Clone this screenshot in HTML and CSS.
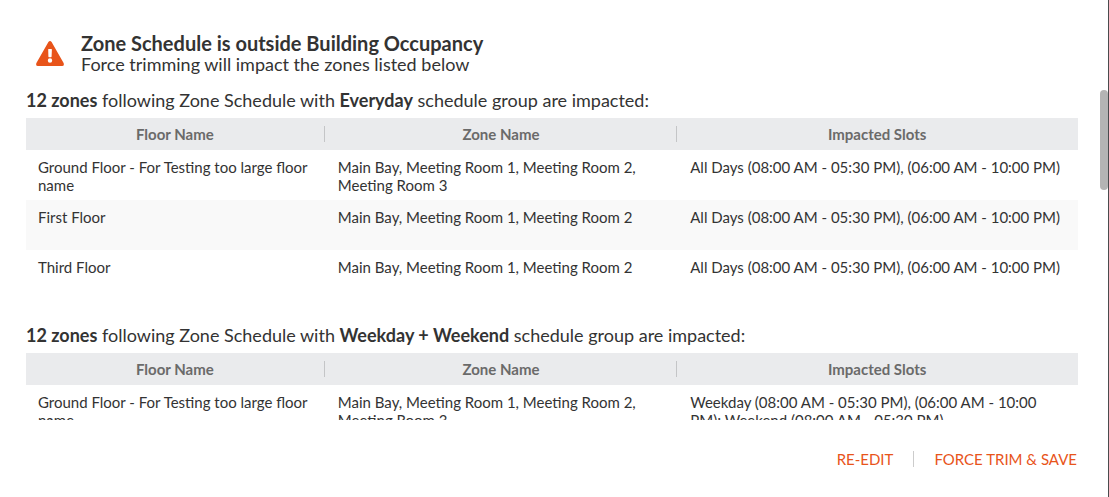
FILE: index.html
```
<!DOCTYPE html>
<html lang="en">
<head>
<meta charset="utf-8">
<meta name="viewport" content="width=device-width, initial-scale=1">
<title>Zone Schedule</title>
<link rel="stylesheet" href="styles.css">
</head>
<body>
<main class="dialog">
  <div class="content">
    <header class="alert">
      <svg class="alert-icon" viewBox="0 0 28 25" aria-hidden="true">
        <path class="icon-body" fill-rule="evenodd" d="M12.4 1Q14 -1 15.6 1L27.6 22Q28.6 25 26 25H2Q-.6 25 .4 22ZM12.2 8.5Q12 7.900 12.700 7.900H15.300Q16 7.900 15.900 8.600L15.600 15.600Q15.600 16.200 15 16.200H13Q12.400 16.200 12.400 15.600ZM14 17.300A2.200 2.200 0 1 0 14 21.700A2.200 2.200 0 1 0 14 17.300Z"/>
      </svg>
      <div>
        <h1 class="title">Zone Schedule is outside Building Occupancy</h1>
        <p class="subtitle">Force trimming will impact the zones listed below</p>
      </div>
    </header>

    <section class="group">
      <h2 class="group-title"><b>12 zones</b> following Zone Schedule with <b>Everyday</b> schedule group are impacted:</h2>
      <table class="zones">
        <thead>
          <tr><th class="floor">Floor Name</th><th class="zone">Zone Name</th><th class="slots">Impacted Slots</th></tr>
        </thead>
        <tbody>
          <tr><td>Ground Floor - For Testing too large floor name</td><td>Main Bay, Meeting Room 1, Meeting Room 2, Meeting Room 3</td><td>All Days (08:00 AM - 05:30 PM), (06:00 AM - 10:00 PM)</td></tr>
          <tr><td>First Floor</td><td>Main Bay, Meeting Room 1, Meeting Room 2</td><td>All Days (08:00 AM - 05:30 PM), (06:00 AM - 10:00 PM)</td></tr>
          <tr><td>Third Floor</td><td>Main Bay, Meeting Room 1, Meeting Room 2</td><td>All Days (08:00 AM - 05:30 PM), (06:00 AM - 10:00 PM)</td></tr>
        </tbody>
      </table>
    </section>

    <section class="group">
      <h2 class="group-title"><b>12 zones</b> following Zone Schedule with <b>Weekday + Weekend</b> schedule group are impacted:</h2>
      <table class="zones">
        <thead>
          <tr><th class="floor">Floor Name</th><th class="zone">Zone Name</th><th class="slots">Impacted Slots</th></tr>
        </thead>
        <tbody>
          <tr><td>Ground Floor - For Testing too large floor name</td><td>Main Bay, Meeting Room 1, Meeting Room 2, Meeting Room 3</td><td>Weekday (08:00 AM - 05:30 PM), (06:00 AM - 10:00 PM); Weekend (08:00 AM - 05:30 PM)</td></tr>
        </tbody>
      </table>
    </section>
  </div>
  <div class="scroll-thumb"></div>
  <footer class="actions">
    <button class="action" type="button">RE-EDIT</button>
    <span class="divider"></span>
    <button class="action" type="button">FORCE TRIM &amp; SAVE</button>
  </footer>
</main>
</body>
</html>
```
FILE: styles.css
```
* { box-sizing: border-box; }

body {
  margin: 0;
  font-family: Lato, "Liberation Sans", sans-serif;
  color: #333;
  background: #fff;
}

.dialog {
  position: relative;
  display: flex;
  flex-direction: column;
  height: 100vh;
  border-right: 1px solid #4a4b4d;
}

.content {
  flex: 1;
  min-height: 0;
  overflow-y: auto;
  scrollbar-width: none;
  padding: 32px 30px 0 26px;
}

.alert {
  display: flex;
  align-items: center;
  gap: 17px;
  padding-left: 10px;
  margin-bottom: 1px;
}

.alert-icon {
  flex: none;
  width: 28px;
  height: 25px;
}

.icon-body { fill: #e8541a; }

.title,
.subtitle,
.group-title { margin: 0; }

.title {
  font-size: 20px;
  line-height: 22px;
  font-weight: 700;
}

.subtitle {
  font-size: 18px;
  line-height: 20px;
}

.group {
  padding-top: 14px;
  margin-bottom: 10px;
}

.group-title {
  font-size: 18px;
  line-height: 22px;
  font-weight: 400;
  margin-bottom: 7px;
}

.zones {
  width: 100%;
  table-layout: fixed;
  border-collapse: collapse;
  font-size: 15px;
  line-height: 18px;
}

.zones th {
  position: relative;
  height: 32px;
  padding: 0 2px 0 0;
  background: #eaebed;
  color: #6a6a6a;
  font-weight: 700;
  text-align: center;
}

.zones th:not(:last-child)::after {
  content: "";
  position: absolute;
  top: 8px;
  right: 1px;
  width: 1px;
  height: 16px;
  background: #c4c5c7;
}

.floor { width: 28.5%; }
.zone { width: 33.5%; }
.slots { width: 38%; }

.zones td {
  height: 50px;
  padding: 8px 12px 6px;
  vertical-align: top;
}

.zones tbody tr:nth-child(even) { background: #f9f9f9; }

.scroll-thumb {
  position: absolute;
  top: 90px;
  right: 0;
  width: 8px;
  height: 100px;
  border-radius: 4px;
  background: #b4b4b4;
}

.actions {
  flex: none;
  display: flex;
  align-items: center;
  justify-content: flex-end;
  gap: 20px;
  padding: 27px 31px 26px;
}

.action {
  padding: 0;
  border: 0;
  background: none;
  color: #e8541a;
  font: inherit;
  font-size: 15px;
  line-height: 24px;
  cursor: pointer;
}

.divider {
  width: 1px;
  height: 16px;
  background: #ccc;
}
```
